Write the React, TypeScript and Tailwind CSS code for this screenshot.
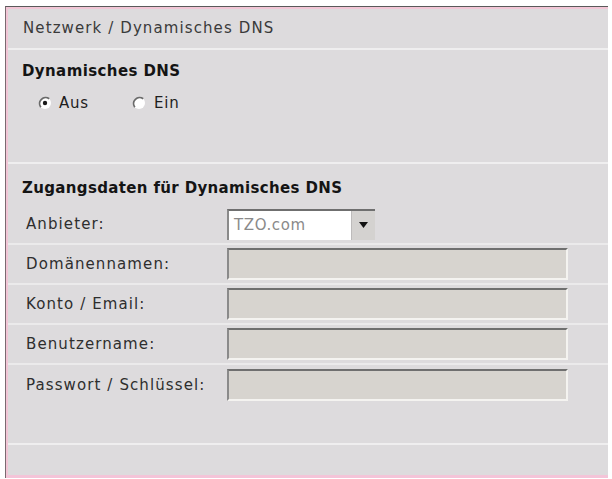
import React from 'react';

const Radio: React.FC<{ checked?: boolean }> = ({ checked }) => (
  <svg width="14" height="14" viewBox="0 0 14 14" className="shrink-0">
    <circle cx="7" cy="7" r="6" fill="#ffffff" />
    <path d="M11.2 2.8 A6 6 0 0 0 2.8 11.2" fill="none" stroke="#6a6a6a" strokeWidth="1.8" />
    {checked && <circle cx="7" cy="7" r="2.2" fill="#1a1a1a" />}
  </svg>
);

const Field: React.FC = () => (
  <div className="w-[341px] h-[32px] bg-[#d7d4cf] border-2 border-t-[#6f6f6f] border-l-[#8a8a8a] border-b-[#f4f3f0] border-r-[#f4f3f0]" />
);

const Label: React.FC<{ children: React.ReactNode }> = ({ children }) => (
  <div className="w-[219px] pl-[18px] text-[15px] text-[#2e2e2e] tracking-[1.1px]">{children}</div>
);

const Row: React.FC<{ label: string; children: React.ReactNode }> = ({ label, children }) => (
  <div className="h-[40px] flex items-center border-b-2 border-[#ebeaeb]">
    <Label>{label}</Label>
    {children}
  </div>
);

export default function App() {
  return (
    <div className="w-[612px] h-[479px] bg-white pt-[6px] pl-[5px]" style={{ fontFamily: '"DejaVu Sans", "Liberation Sans", sans-serif' }}>
      <div className="w-[603px] h-[472px] border-t border-l border-t-[#5a5a5a] border-l-[#7a6a70]">
        <div className="h-full border-t-2 border-l-2 border-b-[3px] border-t-[#f2c6d6] border-l-[#f2c6d6] border-b-[#f4c4d8] bg-[#dddbdd] flex flex-col">
          <div className="h-[41px] flex items-center pl-[15px] text-[15px] text-[#3a3a3a] tracking-[1.1px] border-b-2 border-[#efeeef]">
            Netzwerk / Dynamisches DNS
          </div>
          <div className="h-[114px] border-b-2 border-[#efeeef] pl-[14px]">
            <div className="pt-[10px] text-[15px] font-bold text-[#141414] tracking-[0.4px]">Dynamisches DNS</div>
            <div className="mt-[9px] flex items-center pl-[16px] text-[15px] text-[#1e1e1e] tracking-[0.8px]">
              <Radio checked />
              <span className="ml-[7px]">Aus</span>
              <span className="w-[43px]" />
              <Radio />
              <span className="ml-[8px]">Ein</span>
            </div>
          </div>
          <div className="pl-[14px] pt-[13px] h-[41px] text-[15px] font-bold text-[#141414] tracking-[0.35px]">
            Zugangsdaten für Dynamisches DNS
          </div>
          <Row label="Anbieter:">
            <div className="w-[148px] h-[31px] bg-white flex border-t-2 border-l-2 border-t-[#6f6f6f] border-l-[#8a8a8a]">
              <div className="flex-1 pl-[5px] text-[15px] text-[#8a8a8a] tracking-[0.6px] flex items-center">TZO.com</div>
              <div className="w-[24px] h-full bg-[#d4d2d0] border-l border-[#bdbbbb] flex items-center justify-center">
                <svg width="9" height="6" viewBox="0 0 9 6">
                  <path d="M0 0 H9 L4.5 6 Z" fill="#111" />
                </svg>
              </div>
            </div>
          </Row>
          <Row label="Domänennamen:"><Field /></Row>
          <Row label="Konto / Email:"><Field /></Row>
          <Row label="Benutzername:"><Field /></Row>
          <div className="h-[80px] border-b-2 border-[#efeeef]">
            <div className="h-[40px] flex items-center">
              <Label>Passwort / Schlüssel:</Label>
              <Field />
            </div>
          </div>
          <div className="flex-1" />
        </div>
      </div>
    </div>
  );
}
